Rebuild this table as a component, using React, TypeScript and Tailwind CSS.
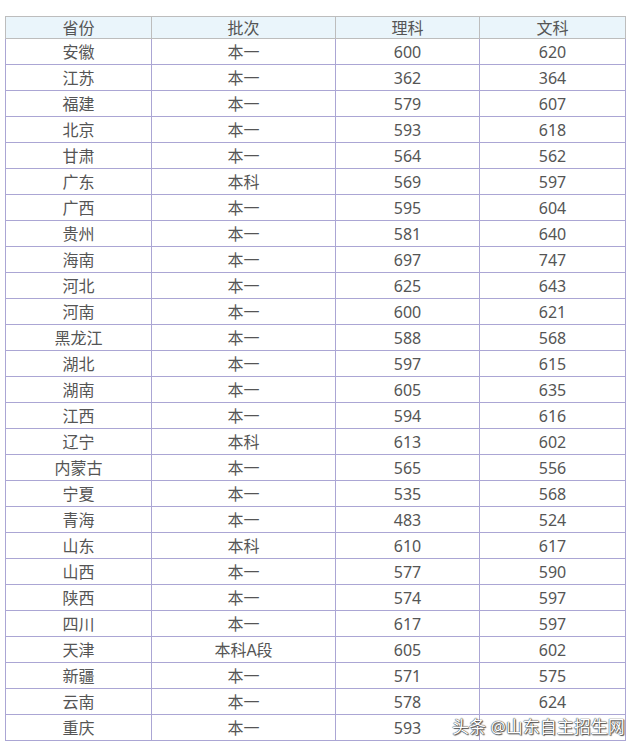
import React from "react";

const rows: [string, string, string, string][] = [
  ["安徽", "本一", "600", "620"],
  ["江苏", "本一", "362", "364"],
  ["福建", "本一", "579", "607"],
  ["北京", "本一", "593", "618"],
  ["甘肃", "本一", "564", "562"],
  ["广东", "本科", "569", "597"],
  ["广西", "本一", "595", "604"],
  ["贵州", "本一", "581", "640"],
  ["海南", "本一", "697", "747"],
  ["河北", "本一", "625", "643"],
  ["河南", "本一", "600", "621"],
  ["黑龙江", "本一", "588", "568"],
  ["湖北", "本一", "597", "615"],
  ["湖南", "本一", "605", "635"],
  ["江西", "本一", "594", "616"],
  ["辽宁", "本科", "613", "602"],
  ["内蒙古", "本一", "565", "556"],
  ["宁夏", "本一", "535", "568"],
  ["青海", "本一", "483", "524"],
  ["山东", "本科", "610", "617"],
  ["山西", "本一", "577", "590"],
  ["陕西", "本一", "574", "597"],
  ["四川", "本一", "617", "597"],
  ["天津", "本科A段", "605", "602"],
  ["新疆", "本一", "571", "575"],
  ["云南", "本一", "578", "624"],
  ["重庆", "本一", "593", "593"],
];

export default function App() {
  return (
    <div className="relative w-[636px] h-[750px] bg-white font-['Noto_Sans','Noto_Sans_CJK_SC',sans-serif] text-[#555] text-[16px]">
      <div className="pt-[16px] pl-[5px]">
        <table className="border-collapse w-[620px] table-fixed">
          <colgroup>
            <col className="w-[146px]" />
            <col className="w-[184px]" />
            <col className="w-[144px]" />
            <col className="w-[146px]" />
          </colgroup>
          <thead>
            <tr className="bg-[#eaf5fb] h-[22px]">
              {["省份", "批次", "理科", "文科"].map((h) => (
                <th
                  key={h}
                  className="border-[1.5px] border-[#bdbdbd] font-normal p-0 leading-[20px] text-center"
                >
                  {h}
                </th>
              ))}
            </tr>
          </thead>
          <tbody>
            {rows.map((r, i) => (
              <tr key={i} className="h-[26px]">
                {r.map((c, j) => (
                  <td
                    key={j}
                    className="border border-[#aba6d4] p-0 leading-[24px] text-center"
                  >
                    {r[3] === "593" && i === 26 && j === 3 ? "" : c}
                  </td>
                ))}
              </tr>
            ))}
          </tbody>
        </table>
      </div>
      <div className="absolute left-[452px] top-[716px] text-[17px] leading-[22px] text-white tracking-[0px] [text-shadow:0_0_1px_#333,0_0_1px_#333,1px_1px_1px_#555]">
        头条 @山东自主招生网
      </div>
    </div>
  );
}
